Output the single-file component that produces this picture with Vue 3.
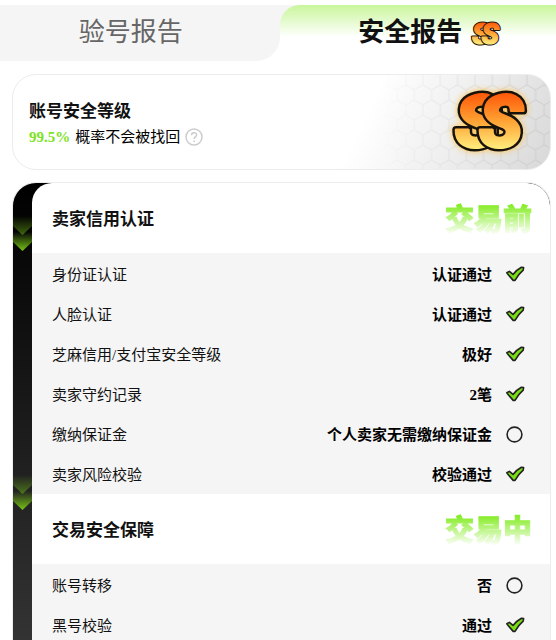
<script setup>
import { ref } from 'vue'

const activeTab = ref('safe')

const sections = [
  {
    title: '卖家信用认证',
    stage: '交易前',
    rows: [
      { label: '身份证认证', value: '认证通过', pass: true },
      { label: '人脸认证', value: '认证通过', pass: true },
      { label: '芝麻信用/支付宝安全等级', value: '极好', pass: true },
      { label: '卖家守约记录', value: '2笔', pass: true },
      { label: '缴纳保证金', value: '个人卖家无需缴纳保证金', pass: false },
      { label: '卖家风险校验', value: '校验通过', pass: true }
    ]
  },
  {
    title: '交易安全保障',
    stage: '交易中',
    rows: [
      { label: '账号转移', value: '否', pass: false },
      { label: '黑号校验', value: '通过', pass: true }
    ]
  }
]
</script>

<template>
  <div class="report">
    <svg class="defs" width="0" height="0" aria-hidden="true">
      <defs>
        <linearGradient id="gold" gradientUnits="userSpaceOnUse" x1="0" y1="8" x2="0" y2="66">
          <stop offset="0" stop-color="#ff5a0a" />
          <stop offset="0.45" stop-color="#ffa032" />
          <stop offset="1" stop-color="#fff584" />
        </linearGradient>
        <linearGradient id="arrow" x1="0" y1="0" x2="0" y2="1">
          <stop offset="0" stop-color="#76c414" stop-opacity="0" />
          <stop offset="1" stop-color="#76c414" />
        </linearGradient>
        <symbol id="grade" viewBox="0 0 80 72">
          <g class="grade-text">
            <text class="grade-edge" x="5" y="61">S</text>
            <text class="grade-fill" x="5" y="61">S</text>
            <text class="grade-edge" x="29" y="61">S</text>
            <text class="grade-fill" x="29" y="61">S</text>
          </g>
        </symbol>
      </defs>
    </svg>

    <nav class="tabs">
      <button class="tab tab-check" :class="{ active: activeTab === 'check' }" @click="activeTab = 'check'">
        验号报告
      </button>
      <button class="tab tab-safe" :class="{ active: activeTab === 'safe' }" @click="activeTab = 'safe'">
        安全报告
        <svg class="tab-grade" aria-hidden="true"><use href="#grade" /></svg>
      </button>
    </nav>

    <section class="level">
      <svg class="honeycomb" aria-hidden="true">
        <defs>
          <pattern id="hex" width="17.32" height="30" patternUnits="userSpaceOnUse" patternTransform="translate(11 0)">
            <path d="M0 0V10L8.66 15L17.32 10V0M8.66 15V25L0 30M8.66 25L17.32 30" fill="none" stroke="#c4c4c4" stroke-width="1" />
          </pattern>
        </defs>
        <rect width="100%" height="100%" fill="url(#hex)" />
      </svg>
      <div class="level-info">
        <h2>账号安全等级</h2>
        <p>
          <strong>99.5%</strong> 概率不会被找回
          <button class="help" aria-label="说明">
            <svg viewBox="0 0 18 18" aria-hidden="true">
              <circle cx="9" cy="9" r="8" />
              <path d="M6.5 7.2C6.5 3.8 11.6 3.9 11.6 7C11.6 9 9.1 8.8 9.1 11M9.1 12.6V14" />
            </svg>
          </button>
        </p>
      </div>
      <svg class="level-grade" aria-hidden="true"><use href="#grade" /></svg>
    </section>

    <div class="details">
      <div class="rail">
        <svg v-for="n in sections.length" :key="n" viewBox="0 0 19 36" aria-hidden="true">
          <path d="M0 0H19V10L9.5 19L0 10Z" fill="url(#arrow)" opacity="0.5" />
          <path d="M0 16H19V26L9.5 35L0 26Z" fill="url(#arrow)" />
        </svg>
      </div>
      <div class="panel">
        <section v-for="section in sections" :key="section.title">
          <header class="section-head">
            <h2>{{ section.title }}</h2>
            <span class="stage">{{ section.stage }}</span>
          </header>
          <dl class="rows">
            <div v-for="row in section.rows" :key="row.label" class="row">
              <dt>{{ row.label }}</dt>
              <dd>
                {{ row.value }}
                <svg class="mark" viewBox="0 0 20 20" aria-hidden="true">
                  <path
                    v-if="row.pass"
                    class="tick"
                    d="M1.8 7.8L4.4 6.4L8 9.4C10.3 6.4 13 4 16.4 2.2L18.6 2.6L18.2 5.2C14.8 8 12.4 11.4 10 15.4H8.2C6.2 13 3.8 10.6 1.8 7.8Z"
                  />
                  <circle v-else class="ring" cx="9.5" cy="9.5" r="7.4" />
                </svg>
              </dd>
            </div>
          </dl>
        </section>
      </div>
    </div>
  </div>
</template>

<style>
body {
  background: #fff;
}
</style>

<style scoped>
.report {
  height: 100vh;
  overflow: hidden;
  box-sizing: border-box;
  padding-top: 5px;
  display: flex;
  flex-direction: column;
  color: #111;
  font-family: "Liberation Serif", "Noto Sans CJK SC", serif;
}

.defs {
  position: absolute;
}

h2,
p,
dl,
dd {
  margin: 0;
}

button {
  border: 0;
  padding: 0;
  background: none;
  font-family: inherit;
  cursor: pointer;
}

.tabs {
  display: flex;
  flex: none;
  height: 56px;
  background: linear-gradient(90deg, #f5f5f5 60%, #fff 60%) top / 100% 28px no-repeat;
}

.tab {
  flex: 1;
  display: flex;
  align-items: center;
  justify-content: center;
  gap: 8px;
  box-sizing: border-box;
  font-size: 26px;
  line-height: 36px;
  color: #666;
}

.tab-check {
  flex: 1.04;
  padding-right: 18px;
  background: #f5f5f5;
  border-bottom-right-radius: 24px;
}

.tab-safe {
  padding-left: 25px;
  border-top-left-radius: 20px;
}

.tab.active {
  color: #111;
  font-weight: bold;
  background: linear-gradient(#c9f69b, #fff 32px);
}

.tab-grade {
  width: 32px;
  height: 29px;
}

.grade-text {
  font-family: Roboto, sans-serif;
  font-size: 72px;
  font-style: italic;
  font-weight: 900;
  stroke-linejoin: round;
}

.grade-edge {
  fill: #17120a;
  stroke: #17120a;
  stroke-width: 8px;
}

.grade-fill {
  fill: url(#gold);
  stroke: url(#gold);
  stroke-width: 3px;
}

.level {
  position: relative;
  flex: none;
  display: flex;
  align-items: center;
  justify-content: space-between;
  box-sizing: border-box;
  height: 96px;
  margin: 13px 5px 0 12px;
  padding: 0 20px 0 16px;
  border: 1px solid #ececec;
  border-radius: 24px;
  overflow: hidden;
  background: linear-gradient(115deg, #fff 64%, #ececec 83%, #d8d8d8);
}

.honeycomb {
  position: absolute;
  top: 0;
  right: 0;
  width: 190px;
  height: 100%;
  opacity: 0.6;
  mask-image: linear-gradient(90deg, transparent 8%, #000);
}

.level-info {
  padding-top: 2px;
}

.level-info h2 {
  font-size: 17px;
  line-height: 28px;
}

.level-info p {
  display: flex;
  align-items: center;
  gap: 5px;
  font-size: 15px;
  line-height: 22px;
  color: #000;
}

.level-info strong {
  color: #7be31b;
}

.help {
  display: flex;
}

.help svg {
  width: 18px;
  height: 18px;
  fill: none;
  stroke: #ccc;
  stroke-width: 1.5px;
}

.level-grade {
  position: relative;
  width: 80px;
  height: 72px;
  filter: drop-shadow(0 0 3px #ffc24a);
}

.details {
  flex: 1;
  display: flex;
  min-height: 0;
  margin: 12px 5px 0 12px;
  border: 1px solid #ececec;
  border-bottom: 0;
  border-radius: 24px 24px 0 0;
  overflow: hidden;
  background: linear-gradient(#000, #333);
}

.rail {
  flex: none;
  display: flex;
  flex-direction: column;
  gap: 223px;
  width: 19px;
  padding-top: 33px;
}

.rail svg {
  flex: none;
  width: 19px;
  height: 36px;
}

.panel {
  flex: 1;
  border-radius: 20px 22px 0 0;
  overflow: hidden;
  background: #fff;
}

.section-head {
  display: flex;
  align-items: flex-start;
  justify-content: space-between;
  box-sizing: border-box;
  height: 70px;
  padding: 16px 18px 0 20px;
}

.section-head h2 {
  font-size: 17px;
  line-height: 42px;
}

.stage {
  font-family: "Noto Sans CJK SC", sans-serif;
  font-size: 29px;
  font-weight: 900;
  line-height: 36px;
  color: transparent;
  -webkit-text-stroke: 1px transparent;
  background: linear-gradient(#7beb14 10%, #f4fdea 92%);
  background-clip: text;
}

.rows {
  padding-top: 1px;
  background: #f5f5f5;
}

.row {
  display: flex;
  align-items: center;
  justify-content: space-between;
  box-sizing: border-box;
  height: 40px;
  padding: 0 25px 2px 20px;
  font-size: 15px;
}

.row dd {
  display: flex;
  align-items: center;
  gap: 13px;
  color: #000;
  font-weight: bold;
}

.mark {
  width: 20px;
  height: 20px;
  margin-top: 3px;
}

.tick {
  fill: #78dc16;
  stroke: #222;
  stroke-width: 1.6px;
  stroke-linejoin: round;
}

.ring {
  fill: none;
  stroke: #222;
  stroke-width: 1.6px;
}
</style>
